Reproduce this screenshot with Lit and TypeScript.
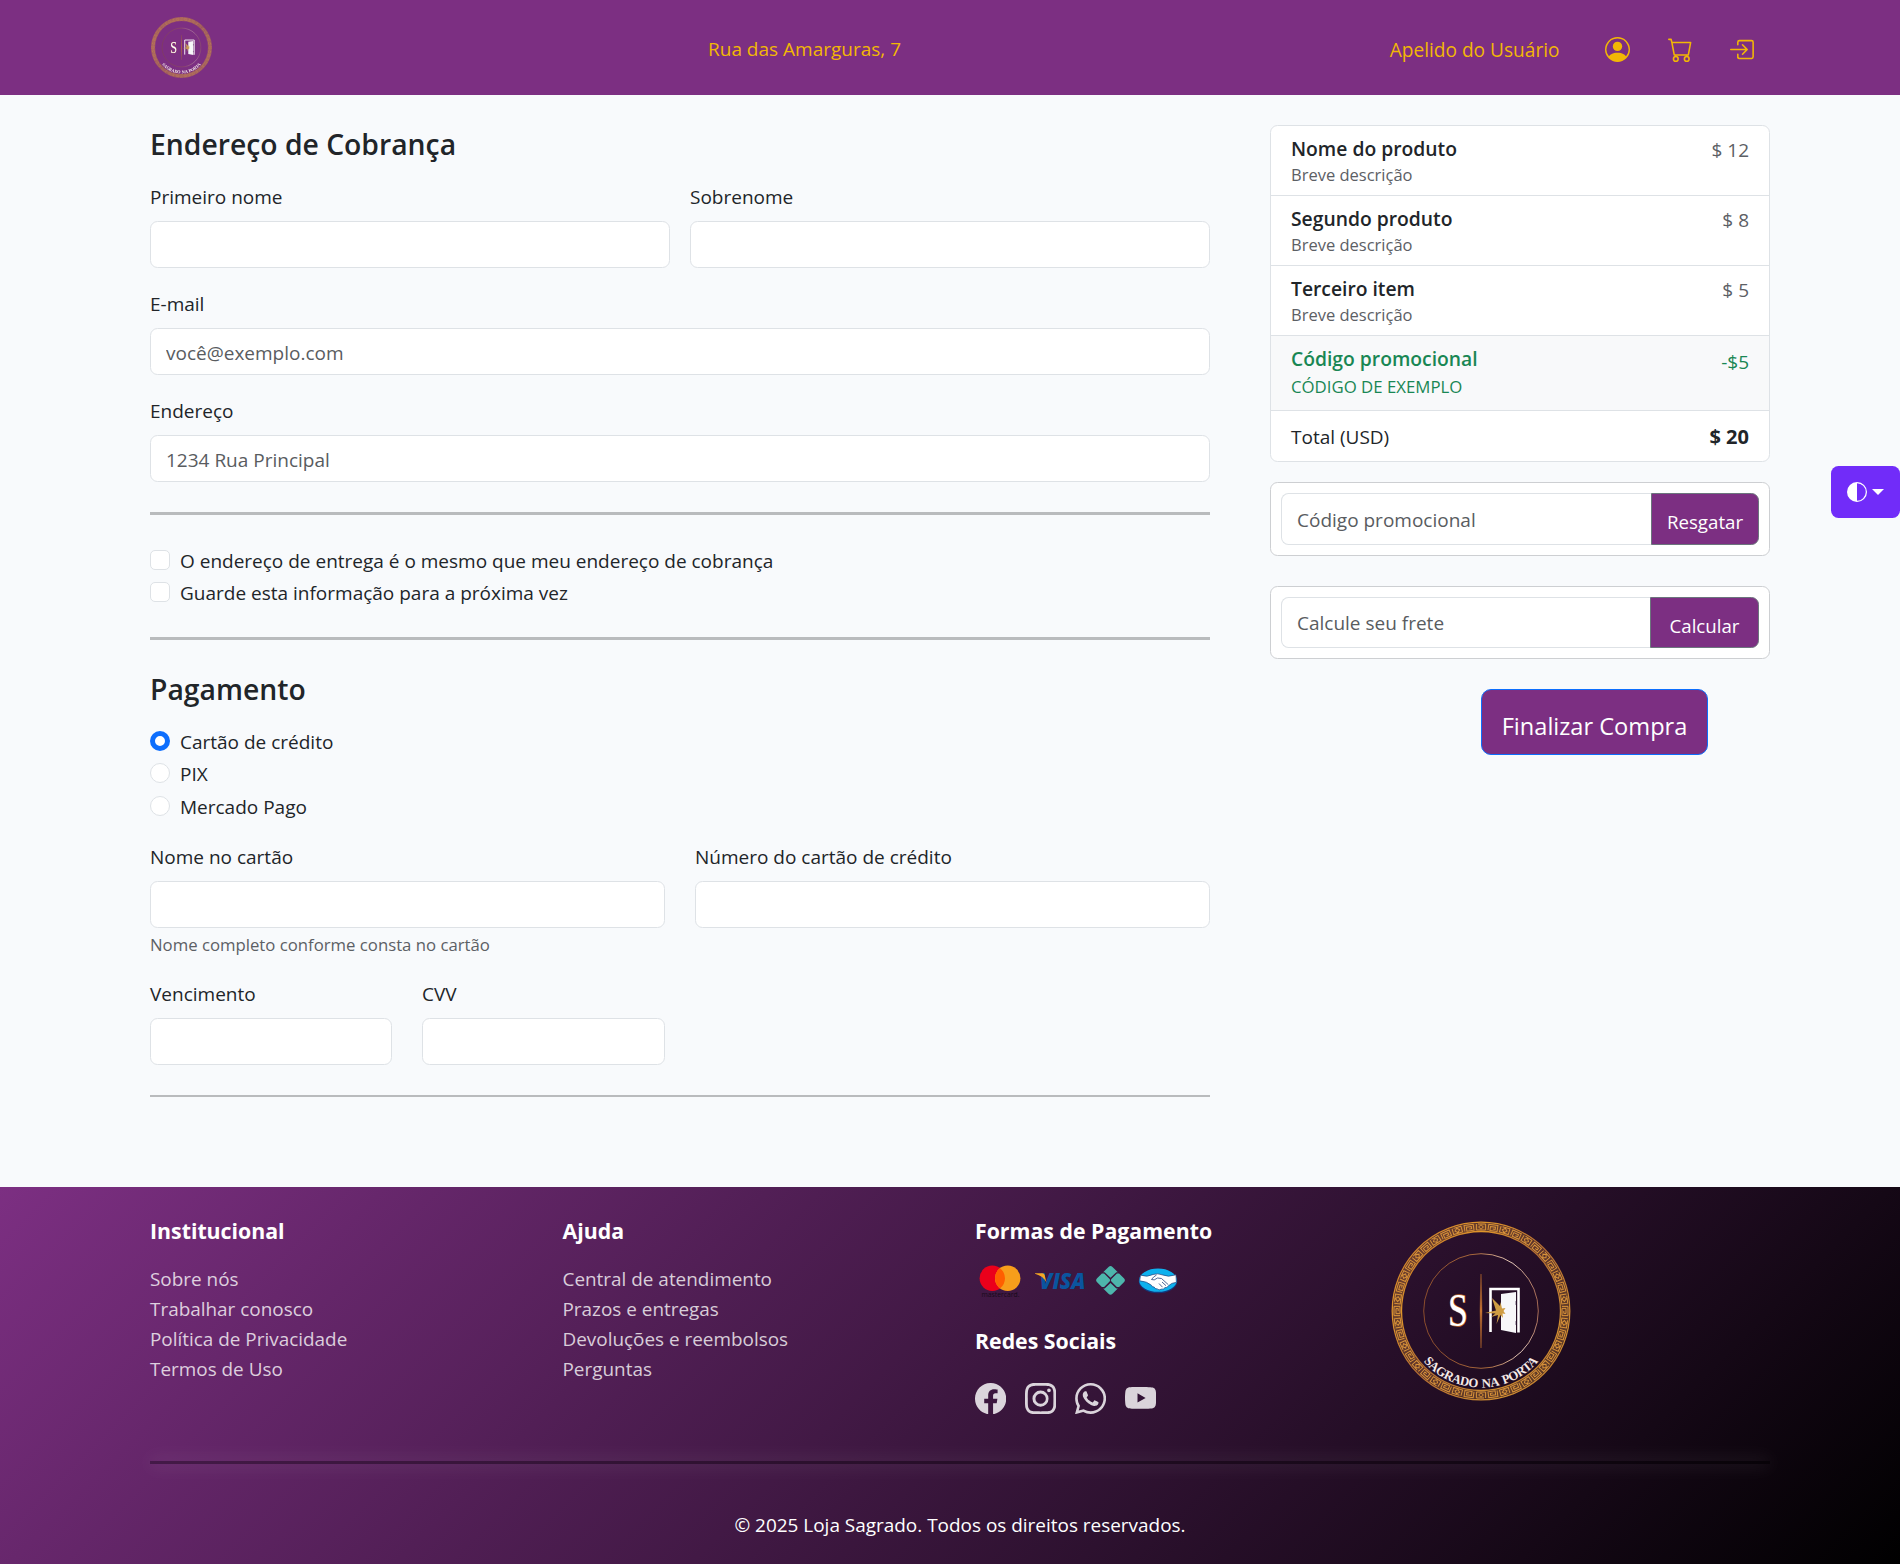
import { LitElement, html, svg, css, nothing } from "lit";
import { customElement, property, state } from "lit/decorators.js";

const MOTIFS = Array.from({ length: 44 }, (_, i) => i * (360 / 44));

/** Round store seal: meander ring, inner circle, monogram and open door. */
@customElement("brand-seal")
class BrandSeal extends LitElement {
  static styles = css`
    :host { display: block; }
    svg { display: block; width: 100%; height: 100%; overflow: visible; }
    .mono { font-family: "Liberation Serif", serif; font-size: 47px; fill: #fff; stroke: #b8652e; stroke-width: 1.4; paint-order: stroke; }
    .motto { font-family: "Liberation Serif", serif; font-size: 12.8px; font-weight: 700; fill: #f5e9e6; word-spacing: 2px; }
  `;
  render() {
    return html`<svg viewBox="-90 -90 180 180" aria-hidden="true">
      <defs>
        <linearGradient id="gold" x1="0" y1="0" x2="1" y2="1">
          <stop offset="0" stop-color="#b5662a" /><stop offset=".25" stop-color="#e0962a" />
          <stop offset=".5" stop-color="#b06a32" /><stop offset=".8" stop-color="#d08e30" /><stop offset="1" stop-color="#a8622c" />
        </linearGradient>
        <linearGradient id="ring" x1="0" y1=".4" x2="1" y2=".3">
          <stop offset="0" stop-color="#8a4c2c" /><stop offset=".5" stop-color="#a8683c" />
          <stop offset=".8" stop-color="#e8cdbf" /><stop offset="1" stop-color="#9c5f48" />
        </linearGradient>
        <path id="arc" d="M-76.5 0A76.5 76.5 0 0 0 76.5 0" />
      </defs>
      <g fill="none" stroke="url(#gold)">
        <circle r="88.8" stroke-width="1.3" />
        <circle r="79.5" stroke-width="1.3" />
        <circle r="84" stroke-width="8" opacity=".38" />
      </g>
      <g fill="none" stroke="#d8923a" stroke-width="1">
        ${MOTIFS.map((a, i) => svg`<g transform="rotate(${a}) translate(0 -84)">
          ${i % 2
            ? svg`<path d="M-4.6 3V-3H4.6V3H-2.6V-1H2.4V1.2H0" />`
            : svg`<path d="M-4.6-3V3H4.6V-3H-3M0-2.2L2.4 0L0 2.2L-2.4 0Z" />`}
        </g>`)}
      </g>
      <circle r="57.3" fill="none" stroke="url(#ring)" stroke-width="1" />
      <path d="M0-37L1 0L0 37L-1 0Z" fill="#d07a34" stroke="#a8602c" stroke-width=".5" />
      <text class="mono" x="-23" y="15.2" text-anchor="middle" textLength="20" lengthAdjust="spacingAndGlyphs">S</text>
      <path d="M9.5 21V-22H37.5V21.5" fill="none" stroke="#fff" stroke-width="2.6" />
      <path d="M20-17L35-19V22L20 19Z" fill="#f7f7f9" />
      <path d="M35.2-10v4M35.2 10v4" stroke="#2b1230" stroke-width="1" />
      <path d="M11-13L19-5L19.500-9L21-2.500L24.500-3L22.500 0L24.500 3L21.500 2.500L22 7L19.500 4L15.500 13L17 4L10 6L14.500 2.500L4 2L15-.5Z" fill="#cf9d44" />
      <text class="motto"><textPath href="#arc" startOffset="50%" text-anchor="middle" textLength="130">SAGRADO NA PORTA</textPath></text>
    </svg>`;
  }
}

const ICONS: Record<string, unknown> = {
  person: svg`<path d="M11 6a3 3 0 1 1-6 0 3 3 0 0 1 6 0"/><path fill-rule="evenodd" d="M0 8a8 8 0 1 1 16 0A8 8 0 0 1 0 8m8-7a7 7 0 0 0-5.468 11.37C3.242 11.226 4.805 10 8 10s4.757 1.225 5.468 2.37A7 7 0 0 0 8 1"/>`,
  cart: svg`<path d="M0 1.5A.5.5 0 0 1 .5 1H2a.5.5 0 0 1 .485.379L2.89 3H14.5a.5.5 0 0 1 .491.592l-1.5 8A.5.5 0 0 1 13 12H4a.5.5 0 0 1-.491-.408L2.01 3.607 1.61 2H.5a.5.5 0 0 1-.5-.5M3.102 4l1.313 7h8.17l1.313-7zM5 12a2 2 0 1 0 0 4 2 2 0 0 0 0-4m7 0a2 2 0 1 0 0 4 2 2 0 0 0 0-4m-7 1a1 1 0 1 1 0 2 1 1 0 0 1 0-2m7 0a1 1 0 1 1 0 2 1 1 0 0 1 0-2"/>`,
  login: svg`<path fill-rule="evenodd" d="M4.500 11v1.500A1.500 1.500 0 0 0 6 14.200h7.800a1.500 1.500 0 0 0 1.500-1.500V3.300a1.500 1.500 0 0 0-1.500-1.500H6a1.500 1.500 0 0 0-1.500 1.500V5a.5.5 0 0 0 1 0V3.300a.5.5 0 0 1 .5-.5h7.800a.5.5 0 0 1 .5.5v9.400a.5.5 0 0 1-.5.5H6a.5.5 0 0 1-.5-.5V11a.5.5 0 0 0-1 0z"/><path fill-rule="evenodd" d="M11.354 8.354a.5.5 0 0 0 0-.708l-3-3a.5.5 0 1 0-.708.708L9.793 7.500H.5a.5.5 0 0 0 0 1h9.293l-2.147 2.146a.5.5 0 0 0 .708.708z"/>`,
  facebook: svg`<path d="M16 8.049c0-4.446-3.582-8.05-8-8.05C3.580 0-.002 3.603-.002 8.050c0 4.017 2.926 7.347 6.750 7.951v-5.625h-2.030V8.050H6.750V6.275c0-2.017 1.195-3.131 3.022-3.131.876 0 1.791.157 1.791.157v1.980h-1.009c-.993 0-1.303.621-1.303 1.258v1.510h2.218l-.354 2.326H9.250V16c3.824-.604 6.750-3.934 6.750-7.951"/>`,
  instagram: svg`<path d="M8 0C5.829 0 5.556.01 4.703.048 3.850.088 3.269.222 2.760.420a3.900 3.900 0 0 0-1.417.923A3.900 3.900 0 0 0 .420 2.760C.222 3.268.087 3.850.048 4.700.010 5.555 0 5.827 0 8.001c0 2.172.010 2.444.048 3.297.040.852.174 1.433.372 1.942.205.526.478.972.923 1.417.444.445.890.719 1.416.923.510.198 1.090.333 1.942.372C5.555 15.990 5.827 16 8 16s2.444-.010 3.298-.048c.851-.040 1.434-.174 1.943-.372a3.900 3.900 0 0 0 1.416-.923c.445-.445.718-.891.923-1.417.197-.509.332-1.090.372-1.942C15.990 10.445 16 10.173 16 8s-.010-2.445-.048-3.299c-.040-.851-.175-1.433-.372-1.941a3.900 3.900 0 0 0-.923-1.417A3.900 3.900 0 0 0 13.240.420c-.510-.198-1.092-.333-1.943-.372C10.443.010 10.172 0 7.998 0zm-.717 1.442h.718c2.136 0 2.389.007 3.232.046.780.035 1.204.166 1.486.275.373.145.640.319.920.599s.453.546.598.920c.110.281.240.705.275 1.485.039.843.047 1.096.047 3.231s-.008 2.389-.047 3.232c-.035.780-.166 1.203-.275 1.485a2.500 2.500 0 0 1-.599.919c-.280.280-.546.453-.920.598-.280.110-.704.240-1.485.276-.843.038-1.096.047-3.232.047s-2.390-.009-3.233-.047c-.780-.036-1.203-.166-1.485-.276a2.500 2.500 0 0 1-.920-.598 2.500 2.500 0 0 1-.600-.920c-.109-.281-.240-.705-.275-1.485-.038-.843-.046-1.096-.046-3.233s.008-2.388.046-3.231c.036-.780.166-1.204.276-1.486.145-.373.319-.640.599-.920s.546-.453.920-.598c.282-.110.705-.240 1.485-.276.738-.034 1.024-.044 2.515-.045zm4.988 1.328a.960.960 0 1 0 0 1.920.960.960 0 0 0 0-1.920m-4.270 1.122a4.109 4.109 0 1 0 0 8.217 4.109 4.109 0 0 0 0-8.217m0 1.441a2.667 2.667 0 1 1 0 5.334 2.667 2.667 0 0 1 0-5.334"/>`,
  whatsapp: svg`<path d="M13.601 2.326A7.850 7.850 0 0 0 7.994 0C3.627 0 .068 3.558.064 7.926c0 1.399.366 2.760 1.057 3.965L0 16l4.204-1.102a7.900 7.900 0 0 0 3.790.965h.004c4.368 0 7.926-3.558 7.930-7.930A7.900 7.900 0 0 0 13.600 2.326zM7.994 14.521a6.600 6.600 0 0 1-3.356-.920l-.240-.144-2.494.654.666-2.433-.156-.251a6.560 6.560 0 0 1-1.007-3.505c0-3.626 2.957-6.584 6.591-6.584a6.560 6.560 0 0 1 4.660 1.931 6.560 6.560 0 0 1 1.928 4.660c-.004 3.639-2.961 6.592-6.592 6.592m3.615-4.934c-.197-.099-1.170-.578-1.353-.646-.182-.065-.315-.099-.445.099-.133.197-.513.646-.627.775-.114.133-.232.148-.430.050-.197-.100-.836-.308-1.592-.985-.590-.525-.985-1.175-1.103-1.372-.114-.198-.011-.304.088-.403.087-.088.197-.232.296-.346.100-.114.133-.198.198-.330.065-.134.034-.248-.015-.347-.050-.099-.445-1.076-.612-1.470-.160-.389-.323-.335-.445-.340-.114-.007-.247-.007-.380-.007a.730.730 0 0 0-.529.247c-.182.198-.691.677-.691 1.654s.710 1.916.810 2.049c.098.133 1.394 2.132 3.383 2.992.470.205.840.326 1.129.418.475.152.904.129 1.246.080.380-.058 1.171-.480 1.338-.943.164-.464.164-.860.114-.943-.049-.084-.182-.133-.380-.232"/>`,
  youtube: svg`<path d="M8.051 1.999h.089c.822.003 4.987.033 6.110.335a2.010 2.010 0 0 1 1.415 1.420c.101.380.172.883.220 1.402l.010.104.022.260.008.104c.065.914.073 1.770.074 1.957v.075c-.001.194-.010 1.108-.082 2.060l-.008.105-.009.104c-.050.572-.124 1.140-.235 1.558a2.010 2.010 0 0 1-1.415 1.420c-1.160.312-5.569.334-6.180.335h-.142c-.309 0-1.587-.006-2.927-.052l-.170-.006-.087-.004-.171-.007-.171-.007c-1.110-.049-2.167-.128-2.654-.260a2.010 2.010 0 0 1-1.415-1.419c-.111-.417-.185-.986-.235-1.558L.090 9.820l-.008-.104A31 31 0 0 1 0 7.680v-.123c.002-.215.010-.958.064-1.778l.007-.103.003-.052.008-.104.022-.260.010-.104c.048-.519.119-1.023.220-1.402a2.010 2.010 0 0 1 1.415-1.420c.487-.130 1.544-.210 2.654-.260l.170-.007.172-.006.086-.003.171-.007A100 100 0 0 1 7.858 2zM6.400 5.209v4.818l4.157-2.408z"/>`,
  halfCircle: svg`<path d="M8 15A7 7 0 1 0 8 1zm0 1A8 8 0 1 1 8 0a8 8 0 0 1 0 16"/>`,
};

@customElement("ui-icon")
class UiIcon extends LitElement {
  static styles = css`
    :host { display: block; }
    svg { display: block; width: 100%; height: 100%; fill: currentColor; }
  `;
  @property() name = "";
  render() {
    return html`<svg viewBox="0 0 16 16" aria-hidden="true">${ICONS[this.name] ?? nothing}</svg>`;
  }
}

/** Accepted payment marks, drawn on one strip. */
@customElement("payment-marks")
class PaymentMarks extends LitElement {
  static styles = css`
    :host { display: block; }
    svg { display: block; overflow: visible; }
    .mc { font-family: "Open Sans", sans-serif; font-size: 7px; fill: #160a18; }
    .visa { font-family: "Open Sans", sans-serif; font-size: 22px; font-weight: 800; font-style: italic; fill: #0a559f; }
  `;
  render() {
    return html`<svg width="210" height="36" viewBox="0 0 210 36">
      <circle cx="17.300" cy="13.300" r="12.700" fill="#eb001b" />
      <circle cx="32.700" cy="13.300" r="12.700" fill="#f79e1b" />
      <path d="M25 3.200a12.700 12.700 0 0 1 0 20.200a12.700 12.700 0 0 1 0-20.200" fill="#ff5f00" />
      <text class="mc" x="6.500" y="32" textLength="38" lengthAdjust="spacingAndGlyphs">mastercard.</text>
      <text class="visa" x="64.500" y="24" textLength="46" lengthAdjust="spacingAndGlyphs">VISA</text>
      <path d="M60 8.200h7.500q1.800 0 2.200 1.800l1.700 7.600q-3-6.500-11.400-8.800z" fill="#f7a823" />
      <g fill="#4db6ac">
        <path d="M133.500 2q2-2.200 4 0l5.300 5.200h-1.500l-5.800 5.600-5.800-5.600h-1.500z" />
        <path d="M133.500 28.700q2 2.200 4 0l5.300-5.200h-1.500l-5.800-5.600-5.800 5.600h-1.500z" />
        <path d="M122.100 17.200q-2-2 0-3.900l4.800-4.800h2.200l5.500 5.500q1.200 1.300 0 2.600l-5.500 5.500h-2.200z" />
        <path d="M148.900 17.200q2-2 0-3.900l-4.800-4.800h-2.200l-5.500 5.500q-1.200 1.300 0 2.600l5.500 5.500h2.200z" />
      </g>
      <ellipse cx="183" cy="16.200" rx="19.200" ry="12" fill="#14387c" />
      <ellipse cx="183" cy="15.200" rx="18.800" ry="11.600" fill="#0eb1ee" />
      <path d="M165.500 10.200q7 2.300 12.500-.700 5-1.500 9 .300 6 2.800 14 0l.400 7.600q-5 .200-7.900 3.400-1.500 2.200-3.500 1.800-1.500 2.200-3.500 1.500-2.500 1.600-4.300-.200-2.200.200-3-1.800-2.400 0-2.700-1.800-4.500-4-11.800-4.500z" fill="#fff" stroke="#22427c" stroke-width=".7" />
      <path d="M181.500 10q-3.500 2-5 4.500 2.500 1.500 6-1.500l4 .5 6.800 6.200M184 18.500l3.500 3.700M187 17l4 3.700" fill="none" stroke="#22427c" stroke-width=".8" />
    </svg>`;
  }
}

interface CartItem { name: string; note: string; price: string; promo?: boolean; }

@customElement("app-root")
class AppRoot extends LitElement {
  static styles = css`
    :host {
      display: flex; flex-direction: column; position: relative;
      width: 100%; min-height: 1564px; background: #f8fafc;
      font-family: "Open Sans", "Noto Sans", sans-serif; font-size: 19px; line-height: 30px; color: #212529;
    }
    * { box-sizing: border-box; }
    h2, h4, p, ul { margin: 0; padding: 0; font-weight: inherit; font-size: inherit; }
    ul { list-style: none; }
    .wrap { width: 1620px; margin: 0 0 0 150px; }

    .top { background: #7c2f82; height: 95px; color: #f2b705; }
    .top .wrap { height: 95px; display: grid; grid-template-columns: 558px 1fr auto; align-items: center; }
    .logo { width: 61px; height: 61px; margin-left: 1px; filter: saturate(.85); }
    .top-text { line-height: 32px; height: 30px; white-space: nowrap; }
    .account { display: flex; align-items: center; padding-right: 15px; padding-top: 4px; }
    .account ui-icon { width: 25px; height: 25px; margin-left: 37.5px; }
    .account .user { margin-right: 8px; font-size: 19.1px; line-height: 30px; }
    .place { padding-top: 2px; height: 34px; }

    .main { display: grid; grid-template-columns: 1060px 500px; column-gap: 60px; padding-top: 30px; height: 1092px; align-items: start; }
    .title { height: 36px; line-height: 39px; font-size: 28.3px; font-weight: 600; margin-bottom: 20px; }
    .title.pay { margin-top: 30px; }
    .row { display: grid; gap: 20px; margin-bottom: 20px; }
    .two { grid-template-columns: 1fr 1fr; }
    .card-row { grid-template-columns: 515px 515px; column-gap: 30px; }
    .small-row { grid-template-columns: 242px 243px; column-gap: 30px; }
    .field label { display: block; height: 30px; line-height: 32px; margin-bottom: 10px; }
    .field input, .group input {
      display: block; width: 100%; height: 47px; padding: 2px 15px 0; border: 1px solid #dee2e6; border-radius: 7.5px;
      background: #fff; font: inherit; color: #212529; outline: none;
    }
    input::placeholder { color: #595c5f; opacity: 1; }
    .hint { display: block; height: 30px; line-height: 33px; font-size: 16.74px; color: #5c6065; }
    .rule { height: 3px; background: #b9bbbd; }
    .rule.spaced { margin-top: 30px; }
    .rule.thin { height: 2px; }
    .checks { display: grid; gap: 2.4px; }
    .checks.options { margin: 30px 0 29.6px; }
    .checks.methods { margin-bottom: 20.2px; }
    .check { display: flex; gap: 10px; height: 30px; align-items: flex-start; }
    .check span { line-height: 32px; white-space: nowrap; }
    .box { flex: none; width: 20px; height: 20px; margin-top: 5px; background: #fff; border: 1px solid #dee2e6; border-radius: 5px; }
    .box.round { border-radius: 50%; }
    .box.on { border: 5px solid #0d6efd; border-radius: 50%; }

    .list { border: 1px solid #dee2e6; border-radius: 7.5px; overflow: hidden; background: #fff; }
    .item { display: flex; justify-content: space-between; padding: 10px 20px; height: 70px; border-bottom: 1px solid #dee2e6; }
    .item .name { height: 24px; line-height: 26px; font-size: 19.3px; font-weight: 600; }
    .item .note { height: 25px; line-height: 30px; font-size: 16.5px; color: #5c6065; }
    .item .price { line-height: 29px; color: #5c6065; }
    .item.promo { height: 75px; background: #f8f9fa; }
    .item.promo .name, .item.promo .note, .item.promo .price { color: #198754; }
    .item.promo .note { line-height: 34px; font-size: 16.8px; }
    .item.promo .price { line-height: 32px; }
    .item.total { height: 50px; border-bottom: 0; line-height: 32px; }
    .item.total b { font-size: 20px; }
    .panel { border: 1px solid #cdcfd2; border-radius: 7.5px; background: #fff; padding: 10px; }
    .group { display: grid; }
    .group input { height: 100%; border-radius: 7.5px 0 0 7.5px; border-right: 0; padding-top: 1px; }
    .group button {
      margin: 0; border: 1px solid #6c757d; border-radius: 0 7.5px 7.5px 0; background: #7c2f82; color: #fff;
      font: inherit; font-size: 18.7px; padding: 5px 0 0;
    }
    .promo-panel { margin-top: 20px; }
    .promo-panel .group { height: 52px; grid-template-columns: 370px 108px; }
    .ship-panel { margin-top: 30px; }
    .ship-panel .group { height: 51px; grid-template-columns: 369px 109px; }
    .ship-panel .group button { padding-top: 7px; }
    .finish {
      display: block; margin: 30px 0 0 211px; width: 227px; height: 66px; border: 1px solid #0d6efd; border-radius: 10px;
      background: #7c2f82; color: #fff; font: inherit; font-size: 23.6px; padding: 7px 0 0;
    }
    .theme {
      position: absolute; right: 0; top: 466px; width: 69px; height: 52px; border-radius: 7.5px; background: #712cf9; color: #fff;
      display: flex; align-items: center; padding: 0 0 0 16px; gap: 5px;
    }
    .theme ui-icon { width: 20px; height: 20px; }
    .caret { border: 6px solid transparent; border-top-color: #fff; border-bottom: 0; }

    .foot { background: linear-gradient(135deg, #7c2f82, #000); height: 377px; color: #fff; }
    .cols { display: grid; grid-template-columns: 412.5px 412.5px 416px auto; height: 274px; padding-top: 29px; }
    .cols h4 { font-size: 21.3px; font-weight: 700; height: 30px; line-height: 30px; white-space: nowrap; }
    .cols ul { margin-top: 18px; font-size: 18.92px; color: rgba(255, 255, 255, .78); }
    .cols li { height: 30px; line-height: 30px; white-space: nowrap; }
    payment-marks { margin: 19px 0 0; height: 36px; }
    .social-title { margin-top: 25px; }
    .social { display: flex; gap: 18.75px; margin-top: 27px; color: rgba(255, 255, 255, .82); }
    .social ui-icon { width: 31.25px; height: 31.25px; }
    .seal { width: 180px; height: 180px; margin: 5px 0 0 0; }
    .line { height: 3px; background: rgba(0, 0, 0, .32); box-shadow: 0 0 18px rgba(255, 255, 255, .25); }
    .copy { text-align: center; margin-top: 46px; font-size: 18.94px; line-height: 30px; }
  `;

  @state() private items: CartItem[] = [
    { name: "Nome do produto", note: "Breve descrição", price: "$ 12" },
    { name: "Segundo produto", note: "Breve descrição", price: "$ 8" },
    { name: "Terceiro item", note: "Breve descrição", price: "$ 5" },
    { name: "Código promocional", note: "CÓDIGO DE EXEMPLO", price: "-$5", promo: true },
  ];

  private field(label: string, placeholder = "", hint = "") {
    return html`<div class="field">
      <label>${label}</label><input type="text" placeholder=${placeholder} />
      ${hint ? html`<span class="hint">${hint}</span>` : nothing}
    </div>`;
  }

  private check(label: string, kind = "") {
    return html`<div class="check"><i class="box ${kind}"></i><span>${label}</span></div>`;
  }

  private links(title: string, entries: string[]) {
    return html`<section><h4>${title}</h4><ul>${entries.map((e) => html`<li>${e}</li>`)}</ul></section>`;
  }

  render() {
    return html`
      <header class="top"><div class="wrap">
        <brand-seal class="logo"></brand-seal>
        <div class="top-text place">Rua das Amarguras, 7</div>
        <div class="account">
          <span class="top-text user">Apelido do Usuário</span>
          <ui-icon name="person"></ui-icon><ui-icon name="cart"></ui-icon><ui-icon name="login"></ui-icon>
        </div>
      </div></header>

      <main class="wrap main">
        <form>
          <h2 class="title">Endereço de Cobrança</h2>
          <div class="row two">${this.field("Primeiro nome")}${this.field("Sobrenome")}</div>
          <div class="row">${this.field("E-mail", "você@exemplo.com")}</div>
          <div class="row">${this.field("Endereço", "1234 Rua Principal")}</div>
          <div class="rule spaced"></div>
          <div class="checks options">
            ${this.check("O endereço de entrega é o mesmo que meu endereço de cobrança")}
            ${this.check("Guarde esta informação para a próxima vez")}
          </div>
          <div class="rule"></div>
          <h2 class="title pay">Pagamento</h2>
          <div class="checks methods">
            ${this.check("Cartão de crédito", "on")}${this.check("PIX", "round")}${this.check("Mercado Pago", "round")}
          </div>
          <div class="row card-row">
            ${this.field("Nome no cartão", "", "Nome completo conforme consta no cartão")}${this.field("Número do cartão de crédito")}
          </div>
          <div class="row small-row">${this.field("Vencimento")}${this.field("CVV")}</div>
          <div class="rule thin spaced"></div>
        </form>

        <aside>
          <div class="list">
            ${this.items.map((i) => html`<div class="item ${i.promo ? "promo" : ""}">
              <div><div class="name">${i.name}</div><div class="note">${i.note}</div></div>
              <span class="price">${i.price}</span>
            </div>`)}
            <div class="item total"><span>Total (USD)</span><b>$ 20</b></div>
          </div>
          <div class="panel promo-panel"><div class="group"><input placeholder="Código promocional" /><button type="button">Resgatar</button></div></div>
          <div class="panel ship-panel"><div class="group"><input placeholder="Calcule seu frete" /><button type="button">Calcular</button></div></div>
          <button class="finish" type="button">Finalizar Compra</button>
        </aside>
      </main>

      <footer class="foot"><div class="wrap">
        <div class="cols">
          ${this.links("Institucional", ["Sobre nós", "Trabalhar conosco", "Política de Privacidade", "Termos de Uso"])}
          ${this.links("Ajuda", ["Central de atendimento", "Prazos e entregas", "Devoluções e reembolsos", "Perguntas"])}
          <section>
            <h4>Formas de Pagamento</h4>
            <payment-marks></payment-marks>
            <h4 class="social-title">Redes Sociais</h4>
            <div class="social">${["facebook", "instagram", "whatsapp", "youtube"].map((n) => html`<ui-icon name=${n}></ui-icon>`)}</div>
          </section>
          <brand-seal class="seal"></brand-seal>
        </div>
        <div class="line"></div>
        <p class="copy">© 2025 Loja Sagrado. Todos os direitos reservados.</p>
      </div></footer>

      <div class="theme"><ui-icon name="halfCircle"></ui-icon><i class="caret"></i></div>
    `;
  }
}
